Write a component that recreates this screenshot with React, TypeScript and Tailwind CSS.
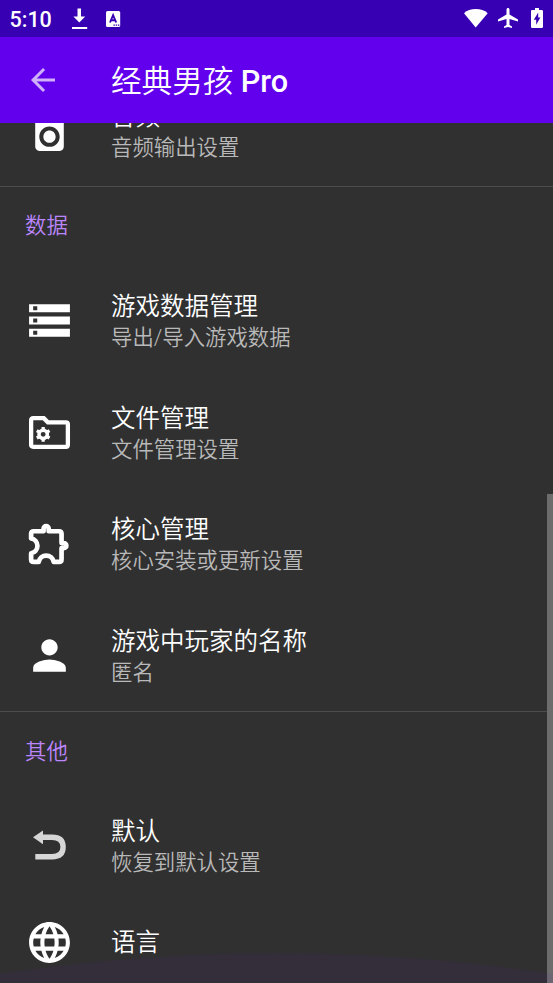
import type { ReactNode } from 'react';
import { MdArrowBack, MdLanguage, MdPerson, MdSpeaker, MdStorage } from 'react-icons/md';

const FONT = "font-[Roboto,'Noto_Sans_CJK_SC',sans-serif]";

// Status bar
function StatusBar() {
  return (
    <div className="flex h-[37px] shrink-0 items-center bg-[#3700b3] text-white">
      <span className="ml-[9.5px] w-[60.5px] pt-[2px] text-[21.5px] leading-none font-medium">5:10</span>
      <svg className="h-[22px] w-[18px]" viewBox="0 0 18 22" fill="currentColor">
        <path d="M7.5 .5H11v8h4.2l-5.9 6-5.9-6h4.1zM2 19h15.2v2H2z" />
      </svg>
      <svg className="ml-[17px] h-4 w-4" viewBox="0 0 16 16">
        <rect x="1" y="0" width="14.2" height="16" rx="1.5" fill="#fff" />
        <path d="M5 11.5 8.1 4.2 11.2 11.5M6.2 9.3h3.8" fill="none" stroke="#3700b3" strokeWidth="1.9" />
        <path d="M8.5 13.4H9.9v1.4H8.5zM10.7 13.4h1.4v1.4h-1.4zM12.9 13.4h1.4v1.4h-1.4z" fill="#3700b3" />
      </svg>
      <div className="ml-auto flex items-center pr-[10px] pb-px">
        <svg className="mr-[8px] h-[19px] w-[26px]" viewBox="0 0 26 19" fill="currentColor">
          <path d="M13.7 18.5 2 4.2C5 1.3 9 0 13.7 0s8.9 1.3 12 4.2z" />
        </svg>
        <svg className="mr-[11px] h-[24px] w-[24px]" viewBox="0 0 24 24" fill="currentColor">
          <path d="M22 15.5v-2l-8.5-5V3.5C13.5 2.67 12.83 2 12 2s-1.5.67-1.5 1.5v5L2 13.5v2l8.5-2.5V19L8 20.5V22l4-1 4 1v-1.5L13.5 19v-6z" />
        </svg>
        <svg className="h-[20px] w-[12px]" viewBox="0 0 12 20">
          <path
            d="M4 0h4v2h2.7q1.3 0 1.3 1.3v15.4q0 1.3-1.3 1.3H1.3Q0 20 0 18.7V3.3Q0 2 1.3 2H4z"
            fill="#fff"
          />
          <path d="M7.2 4.5 2.8 11.8h2.4v5L9.4 9.5H7.2z" fill="#3700b3" />
        </svg>
      </div>
    </div>
  );
}

function FolderCogIcon() {
  return (
    <svg className="size-[49px]" viewBox="0 0 24 24" fill="none" stroke="currentColor">
      <path d="M4 5h5.2l2 2H20q1 0 1 1v10q0 1-1 1H4q-1 0-1-1V6q0-1 1-1z" strokeWidth="2.1" />
      <circle cx="8.9" cy="12.9" r="2.05" strokeWidth="1.7" />
      <path
        d="M8.9 9.3v1.5M8.9 15v1.5M5.78 11.1l1.3.75M10.72 13.95l1.3.75M5.78 14.7l1.3-.75M10.72 11.85l1.3-.75"
        strokeWidth="1.6"
      />
    </svg>
  );
}

function PuzzleIcon() {
  return (
    <svg
      className="size-[49px]"
      viewBox="0 0 24 24"
      fill="none"
      stroke="currentColor"
      strokeWidth="2.3"
      strokeLinejoin="round"
    >
      <path d="M3 9.5a3.7 3.7 0 0 1 0 7.3V19.8q0 1.2 1.2 1.2H6.75a3.7 3.7 0 0 1 7.3 0H16.7q1.2 0 1.2-1.2V14.3h1.1a1.25 1.25 0 0 0 0-2.5H17.9V7.2Q17.9 6 16.7 6H11.6V4.7a1.25 1.25 0 0 0-2.5 0V6H4.2Q3 6 3 7.2z" />
    </svg>
  );
}

function RestoreIcon() {
  return (
    <svg className="size-[49px] text-[#d6d6d6]" viewBox="0 0 49 49">
      <path d="M8 16.3 18 9.5v13.7z" fill="currentColor" />
      <path
        d="M17 16.3H27C34.5 16.3 38.1 19.4 38.1 26S34.5 35.7 27 35.7H10.3"
        fill="none"
        stroke="currentColor"
        strokeWidth="5.4"
      />
    </svg>
  );
}

function Category({ children }: { children: ReactNode }) {
  return (
    <div className="flex h-[78.5px] items-center border-t border-[#4c4c4c] pt-px pl-[25px] text-[21.4px] text-[#bb86fc]">
      {children}
    </div>
  );
}

interface PreferenceProps {
  icon: ReactNode;
  title: string;
  summary?: string;
}

function Preference({ icon, title, summary }: PreferenceProps) {
  return (
    <div className={`flex items-center pl-[24.5px] ${summary ? 'h-[111.7px]' : 'h-[81px]'}`}>
      <div className="w-[86.5px] text-white">{icon}</div>
      <div className="pt-px">
        <div className="text-[24.5px] leading-[33px] text-white">{title}</div>
        {summary && <div className="text-[21.4px] leading-[29px] text-[#b9b9b9]">{summary}</div>}
      </div>
    </div>
  );
}

export default function App() {
  return (
    <div className={`relative flex h-[983px] w-[553px] flex-col overflow-hidden bg-[#303030] font-[350] ${FONT}`}>
      <StatusBar />

      {/* Toolbar */}
      <header className="z-10 flex h-[86px] shrink-0 items-center bg-[#6200ee] pl-[25px]">
        <MdArrowBack className="size-[36px] text-[#cfb0fa]" />
        <h1 className="ml-[50px] pt-[5px] text-[30.6px] leading-none text-white">
          经典男孩 <span className="font-medium">Pro</span>
        </h1>
      </header>

      {/* Settings list, scrolled part way down */}
      <main className="-mt-[48.5px] shrink-0">
        <Preference icon={<MdSpeaker className="size-[49px]" />} title="音频" summary="音频输出设置" />

        <Category>数据</Category>
        <Preference icon={<MdStorage className="size-[49px]" />} title="游戏数据管理" summary="导出/导入游戏数据" />
        <Preference icon={<FolderCogIcon />} title="文件管理" summary="文件管理设置" />
        <Preference icon={<PuzzleIcon />} title="核心管理" summary="核心安装或更新设置" />
        <Preference icon={<MdPerson className="size-[49px]" />} title="游戏中玩家的名称" summary="匿名" />

        <Category>其他</Category>
        <Preference icon={<RestoreIcon />} title="默认" summary="恢复到默认设置" />
        <Preference icon={<MdLanguage className="size-[49px]" />} title="语言" />
      </main>

      {/* Scrollbar thumb */}
      <div className="absolute right-0 bottom-0 h-[489px] w-[6px] bg-[#6c6c6c]" />

      {/* Overscroll glow */}
      <svg className="pointer-events-none absolute bottom-0 left-0 h-[30px] w-full" viewBox="0 0 553 30">
        <circle cx="276" cy="1831" r="1831" fill="#7400d7" fillOpacity="0.06" />
      </svg>
    </div>
  );
}
